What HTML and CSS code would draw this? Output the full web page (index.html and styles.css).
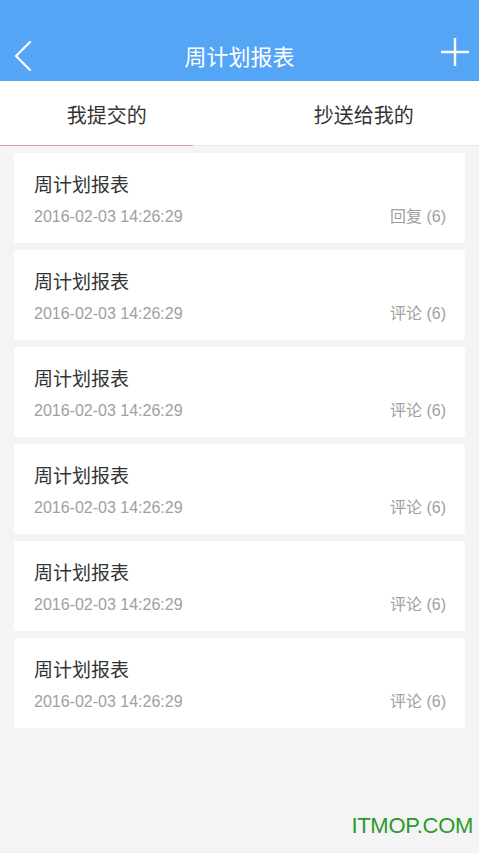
FILE: index.html
```html
<!DOCTYPE html>
<html lang="zh-CN">
<head>
	<meta charset="UTF-8">
	<title>周计划报表</title>
	<link rel="stylesheet" href="styles.css">
</head>
<body>
	<header class="top-bar">
		<div class="nav-row">
			<a class="nav-btn" href="#">
				<svg width="40" height="46" viewBox="0 0 40 46"><path d="M30 7 L16 21 L30 35" fill="none" stroke="#fff" stroke-width="2.2" stroke-linecap="round" stroke-linejoin="round"/></svg>
			</a>
			<h1 class="title">周计划报表</h1>
			<a class="nav-btn" href="#">
				<svg width="40" height="46" viewBox="0 0 40 46"><path d="M2 17 H30 M16 3 V31" fill="none" stroke="#fff" stroke-width="2.4"/></svg>
			</a>
		</div>
	</header>

	<nav class="tabs">
		<div class="tab tab-l active">我提交的</div>
		<div class="tab tab-r">抄送给我的</div>
	</nav>

	<section class="list">
		<div class="card">
			<div class="card-title">周计划报表</div>
			<div class="card-meta"><span>2016-02-03 14:26:29</span><span>回复 (6)</span></div>
		</div>
		<div class="card">
			<div class="card-title">周计划报表</div>
			<div class="card-meta"><span>2016-02-03 14:26:29</span><span>评论 (6)</span></div>
		</div>
		<div class="card">
			<div class="card-title">周计划报表</div>
			<div class="card-meta"><span>2016-02-03 14:26:29</span><span>评论 (6)</span></div>
		</div>
		<div class="card">
			<div class="card-title">周计划报表</div>
			<div class="card-meta"><span>2016-02-03 14:26:29</span><span>评论 (6)</span></div>
		</div>
		<div class="card">
			<div class="card-title">周计划报表</div>
			<div class="card-meta"><span>2016-02-03 14:26:29</span><span>评论 (6)</span></div>
		</div>
		<div class="card">
			<div class="card-title">周计划报表</div>
			<div class="card-meta"><span>2016-02-03 14:26:29</span><span>评论 (6)</span></div>
		</div>
	</section>

	<div class="watermark">ITMOP.COM</div>
</body>
</html>
```

FILE: styles.css
```css
* {margin: 0; padding: 0; box-sizing: border-box;}
html, body {height: 100%;}
body {background: #f4f4f4; font-family: "Liberation Sans", "Noto Sans CJK SC", sans-serif; color: #333; position: relative; overflow: hidden;}

/* 顶部导航 */
.top-bar {background: #55a5f7; height: 81px; padding-top: 35px;}
.nav-row {display: flex; justify-content: space-between; align-items: center; height: 46px;}
.nav-btn {display: block; width: 40px; height: 46px;}
.nav-btn svg {display: block;}
.title {font-size: 22px; font-weight: normal; color: #fff; line-height: 46px;}

/* 切换标签 */
.tabs {display: flex; height: 65px; background: #fff; border-bottom: 1px solid #e8e8e8; position: relative;}
.tab {flex: 0 0 50%; display: flex; align-items: center; justify-content: center; font-size: 20px; color: #333; position: relative; padding-top: 2px;}
.tab-l {padding-right: 26px;}
.tab-r {padding-left: 9px;}
.tab.active::after {content: ""; position: absolute; left: 0; bottom: -1px; width: 193px; height: 1px; background: #ef9c9c;}

/* 列表 */
.list {display: flex; flex-direction: column; gap: 7px; padding: 7px 14px;}
.card {background: #fff; height: 90px; border-radius: 3px; padding: 20px 19px 16px 20px;}
.card-title {font-size: 19px; line-height: 26px; color: #333;}
.card-meta {display: flex; justify-content: space-between; margin-top: 8px; font-size: 16px; line-height: 20px; color: #a0a0a0;}

.watermark {position: absolute; right: 6px; bottom: 14px; font-size: 22px; color: #2b9a2b; font-family: "Liberation Sans", sans-serif; letter-spacing: -0.3px;}
```
